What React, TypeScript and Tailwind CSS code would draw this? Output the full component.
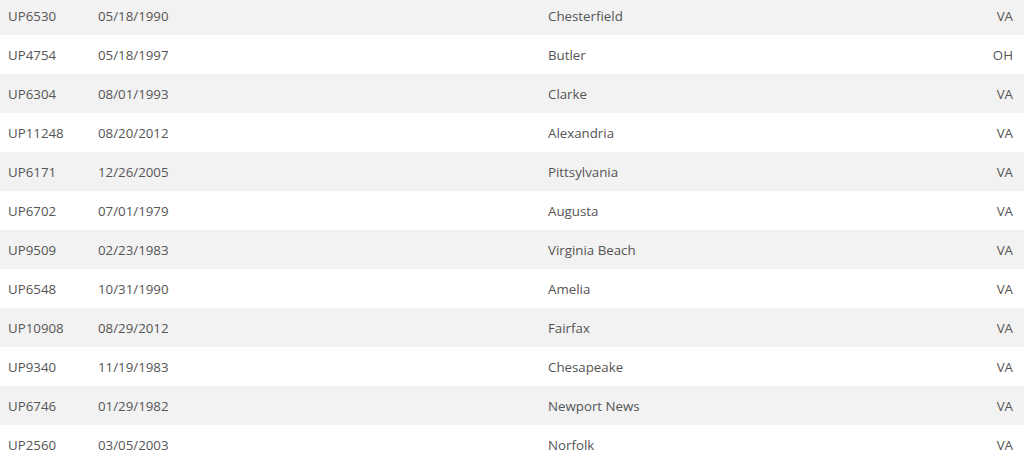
import React from "react";

const rows: [string, string, string, string][] = [
  ["UP6530", "05/18/1990", "Chesterfield", "VA"],
  ["UP4754", "05/18/1997", "Butler", "OH"],
  ["UP6304", "08/01/1993", "Clarke", "VA"],
  ["UP11248", "08/20/2012", "Alexandria", "VA"],
  ["UP6171", "12/26/2005", "Pittsylvania", "VA"],
  ["UP6702", "07/01/1979", "Augusta", "VA"],
  ["UP9509", "02/23/1983", "Virginia Beach", "VA"],
  ["UP6548", "10/31/1990", "Amelia", "VA"],
  ["UP10908", "08/29/2012", "Fairfax", "VA"],
  ["UP9340", "11/19/1983", "Chesapeake", "VA"],
  ["UP6746", "01/29/1982", "Newport News", "VA"],
  ["UP2560", "03/05/2003", "Norfolk", "VA"],
];

export default function App() {
  return (
    <div
      className="w-[1024px] h-[458px] overflow-hidden bg-white text-[13.3px] text-[#555555]"
      style={{ fontFamily: '"Open Sans", "Liberation Sans", sans-serif' }}
    >
      <div className="-mt-[4px]">
        {rows.map((r, i) => (
          <div
            key={i}
            className={`grid grid-cols-[90px_450px_1fr_auto] items-center h-[39px] pl-2 pr-[11px] pt-[2px] ${
              i % 2 === 0 ? "bg-[#f2f2f2]" : "bg-white"
            }`}
          >
            <div>{r[0]}</div>
            <div>{r[1]}</div>
            <div>{r[2]}</div>
            <div className="text-right">{r[3]}</div>
          </div>
        ))}
      </div>
    </div>
  );
}
